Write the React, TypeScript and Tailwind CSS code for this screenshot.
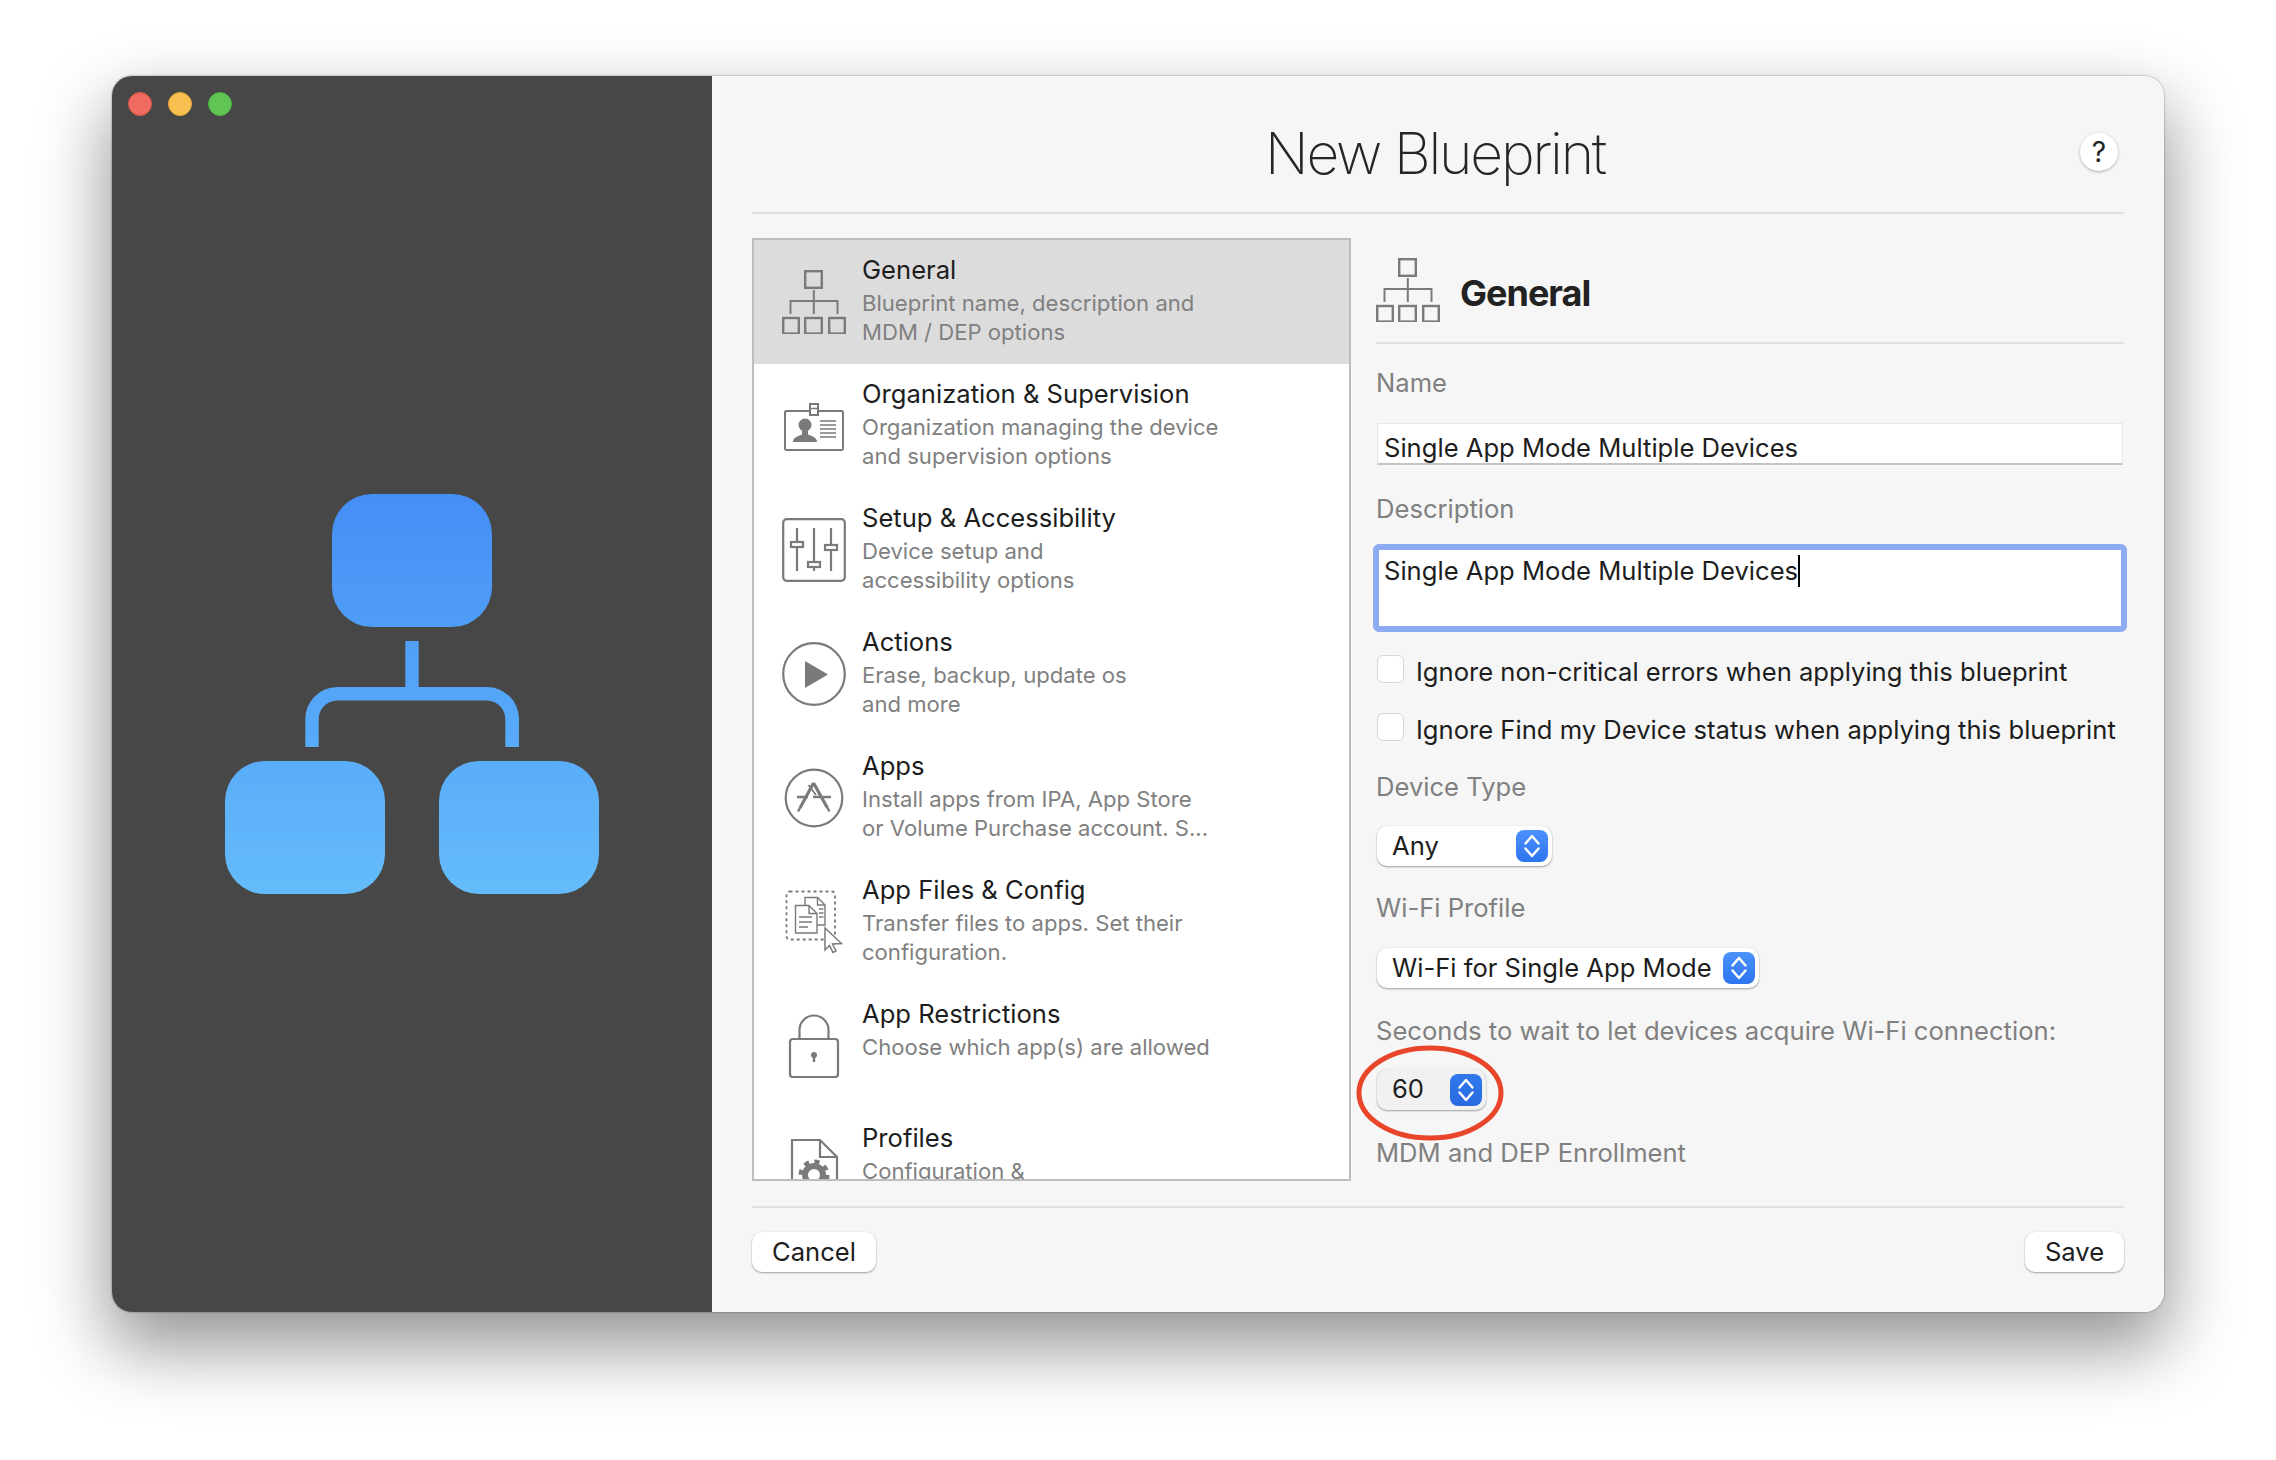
import React from "react";

const G = "#7a7a7a";

function OrgIcon() {
  return (
    <svg width="64" height="64" viewBox="0 0 64 64" fill="none" stroke={G} strokeWidth="2.400" className="shrink-0">
      <rect x="23.200" y="1.200" width="16.600" height="16.600" />
      <path d="M31.800 20V44M8.500 44V31H55.500V44" strokeWidth="2" />
      <rect x="1.200" y="48" width="15.600" height="15.600" />
      <rect x="23.200" y="48" width="16.600" height="15.600" />
      <rect x="47.200" y="48" width="15.600" height="15.600" />
    </svg>
  );
}

function BadgeIcon() {
  return (
    <svg width="64" height="64" viewBox="0 0 64 64" fill="none" stroke={G} strokeWidth="2">
      <path d="M28 17H4.500a1.500 1.500 0 0 0-1.500 1.500V54.500a1.500 1.500 0 0 0 1.500 1.500H59.500a1.500 1.500 0 0 0 1.500-1.500V18.500a1.500 1.500 0 0 0-1.500-1.500H36" />
      <rect x="28" y="10" width="8" height="11" />
      <path d="M28 14.500H36" strokeWidth="1.500" />
      <circle cx="23" cy="31" r="6.500" fill={G} stroke="none" />
      <path d="M11 48c0-5 6-6 9-7.500v-4h6v4c3 1.500 9 2.500 9 7.500z" fill={G} stroke="none" />
      <path d="M38 27H54M38 31H54M38 35H54M38 39H54M38 43H54" strokeWidth="1.600" />
    </svg>
  );
}

function SlidersIcon() {
  return (
    <svg width="64" height="64" viewBox="0 0 64 64" fill="none" stroke={G} strokeWidth="2.200">
      <rect x="1.200" y="1.200" width="61.600" height="61.600" rx="3.500" />
      <path d="M15 10V24M15 29V53M32 10V44M32 49V53M49 10V27M49 32V53" />
      <rect x="9" y="24" width="12" height="5" />
      <rect x="26" y="44" width="12" height="5" />
      <rect x="43" y="27" width="12" height="5" />
    </svg>
  );
}

function PlayIcon() {
  return (
    <svg width="64" height="64" viewBox="0 0 64 64" fill="none" stroke={G} strokeWidth="2.200">
      <circle cx="32" cy="32" r="30.800" />
      <path d="M23 19L46 32.500L23 46z" fill={G} stroke="none" />
    </svg>
  );
}

function AppStoreIcon() {
  return (
    <svg width="64" height="64" viewBox="0 0 64 64" fill="none" stroke={G} strokeWidth="2.200">
      <circle cx="32" cy="32" r="28.300" />
      <path d="M31.500 17L18 42" strokeWidth="3.200" />
      <path d="M31.500 17L45.500 42" strokeWidth="3.200" />
      <path d="M26.500 19L34 29" strokeWidth="1.800" />
      <path d="M15 31H26M31 31H38M41 31H49" strokeWidth="2.400" />
      <path d="M18 42l-2 3.500M45.500 42l2 3.500" strokeWidth="2.400" />
    </svg>
  );
}

function FilesIcon() {
  return (
    <svg width="64" height="64" viewBox="0 0 64 64" fill="none" stroke={G} strokeWidth="1.400" className="overflow-visible">
      <rect x="4.500" y="1.500" width="48.500" height="48" rx="3" strokeDasharray="3 3" strokeWidth="1.800" />
      <path d="M23 15V7.500H35.500L43 15V35H35" />
      <path d="M35.500 7.500V15H43M37 19H41.500M37 23H41.500M37 27H41.500" />
      <path d="M13.500 15.500H27L35 23.500V43H13.500z" fill="#fff" />
      <path d="M27 15.500V23.500H35M17 27H30M17 32H30M17 37H26" />
      <path d="M43 38V60L47.500 55.500L51 62.500L54 61L50.500 54L59.500 53.500z" fill="#fff" strokeWidth="1.500" />
    </svg>
  );
}

function LockIcon() {
  return (
    <svg width="64" height="64" viewBox="0 0 64 64" fill="none" stroke={G} strokeWidth="2.200">
      <path d="M17.500 26V16a14.500 14.500 0 0 1 29 0V26" />
      <rect x="8" y="25" width="48" height="38" rx="3" />
      <circle cx="32" cy="41" r="3" fill={G} stroke="none" />
      <path d="M32 42V48" strokeWidth="2.400" />
    </svg>
  );
}

function ProfileIcon() {
  return (
    <svg width="64" height="64" viewBox="0 0 64 64" fill="none" stroke={G} strokeWidth="2.200">
      <path d="M10 64V2H38L55 19V64" />
      <path d="M38 2V19H55" />
      <circle cx="32" cy="37" r="9" stroke={G} strokeWidth="6" />
      <circle cx="32" cy="37" r="13" stroke={G} strokeWidth="5" strokeDasharray="5 5.200" />
    </svg>
  );
}

function Chevrons() {
  return (
    <svg width="32" height="32" viewBox="0 0 32 32" fill="none" stroke="#fff" strokeWidth="2.400" strokeLinecap="round" strokeLinejoin="round">
      <path d="M9.500 13.500L16 6L22.500 13.500" />
      <path d="M9.500 18.500L16 26L22.500 18.500" />
    </svg>
  );
}

function Select({ children, className, blue }: { children: React.ReactNode; className: string; blue: string }) {
  return (
    <div className={`ml-px rounded-[10px] shadow-[0_1px_2px_rgba(0,0,0,0.35),0_0_1px_rgba(0,0,0,0.15)] flex items-center justify-between pl-[15px] pr-[4px] text-[25.600px] text-[#1d1d1d] ${className}`}>
      <span>{children}</span>
      <span className={`w-[32px] h-[32px] rounded-[8px] ${blue}`}>
        <Chevrons />
      </span>
    </div>
  );
}

function Label({ children, className }: { children: React.ReactNode; className: string }) {
  return <div className={`h-[32px] leading-[32px] text-[25.600px] whitespace-nowrap text-[#808080] ${className}`}>{children}</div>;
}

function Check({ children, className }: { children: React.ReactNode; className: string }) {
  return (
    <div className={`flex items-center h-[28px] ml-px ${className}`}>
      <span className="w-[27px] h-[28px] rounded-[6px] bg-white border border-[#d6d6d6] mr-[12px]" />
      <span className="pt-[6px] text-[25.600px] leading-[32px] text-[#1d1d1d] whitespace-nowrap">{children}</span>
    </div>
  );
}

const rows = [
  { Icon: OrgIcon, title: "General", lines: ["Blueprint name, description and", "MDM / DEP options"], active: true },
  { Icon: BadgeIcon, title: "Organization & Supervision", lines: ["Organization managing the device", "and supervision options"] },
  { Icon: SlidersIcon, title: "Setup & Accessibility", lines: ["Device setup and", "accessibility options"] },
  { Icon: PlayIcon, title: "Actions", lines: ["Erase, backup, update os", "and more"] },
  { Icon: AppStoreIcon, title: "Apps", lines: ["Install apps from IPA, App Store", "or Volume Purchase account. S..."] },
  { Icon: FilesIcon, title: "App Files & Config", lines: ["Transfer files to apps. Set their", "configuration."] },
  { Icon: LockIcon, title: "App Restrictions", lines: ["Choose which app(s) are allowed"] },
  { Icon: ProfileIcon, title: "Profiles", lines: ["Configuration &"] },
];

function Hero() {
  return (
    <svg width="374" height="400" viewBox="225 494 374 400">
      <defs>
        <linearGradient id="hero" gradientUnits="userSpaceOnUse" x1="0" y1="494" x2="0" y2="894">
          <stop offset="0" stopColor="#458ef6" />
          <stop offset="1" stopColor="#64bcfa" />
        </linearGradient>
      </defs>
      <g fill="url(#hero)">
        <rect x="332" y="494" width="160" height="133" rx="40" />
        <rect x="225" y="761" width="160" height="133" rx="40" />
        <rect x="439" y="761" width="160" height="133" rx="40" />
        <path d="M405.300 641H418.700V687H487A32 32 0 0 1 519 719V747H505.300V719A18.500 18.500 0 0 0 487 700.500H337A18.500 18.500 0 0 0 318.700 719V747H305.300V719A32 32 0 0 1 337 687H405.300z" />
      </g>
    </svg>
  );
}

const gradientBlue = "bg-gradient-to-b from-[#4b92fb] to-[#2d74f0]";

export default function App() {
  return (
    <div className="w-[2276px] h-[1460px] bg-white overflow-hidden pt-[76px] pl-[112px] font-[Inter,sans-serif]">
      <div className="w-[2052px] h-[1236px] rounded-[20px] flex overflow-hidden shadow-[0_32px_70px_4px_rgba(0,0,0,0.42),0_0_2px_rgba(0,0,0,0.5)]">
        <div className="relative w-[600px] shrink-0 bg-[#474747] flex items-center justify-center">
          <div className="absolute left-[16px] top-[16px] flex gap-[16px]">
            <span className="w-[24px] h-[24px] rounded-full bg-[#ef6b60] border border-[#dd5249]" />
            <span className="w-[24px] h-[24px] rounded-full bg-[#f6bf4f] border border-[#e0a43a]" />
            <span className="w-[24px] h-[24px] rounded-full bg-[#61c554] border border-[#4eae44]" />
          </div>
          <Hero />
        </div>
        <div className="flex-1 min-w-0 bg-[#f6f6f6] flex flex-col px-[40px]">
          <div className="relative h-[138px] border-b-2 border-[#e0e0e0] flex items-center justify-center">
            <h1 className="text-[57px] font-extralight tracking-[-2.200px] text-[#262626] mt-[19px] ml-[-6px]">New Blueprint</h1>
            <div className="absolute right-[6px] top-[57px] w-[38px] h-[38px] rounded-full bg-white shadow-[0_1px_3px_rgba(0,0,0,0.3)] flex items-center justify-center text-[28px] text-[#262626]">?</div>
          </div>
          <div className="flex gap-[25px] h-[943px] mt-[24px]">
            <div className="w-[599px] shrink-0 border-2 border-[#bdbdbd] bg-white overflow-hidden">
              {rows.map((r) => (
                <div key={r.title} className={`h-[124px] flex ${r.active ? "bg-[#dcdcdc]" : ""}`}>
                  <div className="w-[108px] shrink-0 pl-[28px] flex items-center">
                    <r.Icon />
                  </div>
                  <div className="pt-[14px] whitespace-nowrap">
                    <div className="text-[25.600px] leading-[32px] text-[#1d1d1d]">{r.title}</div>
                    <div className="mt-[3px]">
                      {r.lines.map((l) => (
                        <div key={l} className="text-[22.100px] leading-[28.500px] text-[#808080]">{l}</div>
                      ))}
                    </div>
                  </div>
                </div>
              ))}
            </div>
            <div className="flex-1 min-w-0">
              <div className="h-[106px] border-b-2 border-[#e0e0e0] flex items-center">
                <OrgIcon />
                <span className="ml-[20px] mt-[6px] text-[36px] font-bold tracking-[-1px] text-[#222]">General</span>
              </div>
              <Label className="mt-[23px]">Name</Label>
              <div className="mt-[24px] mx-px h-[42px] bg-white border border-[#e6e6e6] border-b-2 border-b-[#c4c4c4] pl-[6px] pt-[8px] text-[25.600px] leading-[32px] text-[#1d1d1d]">Single App Mode Multiple Devices</div>
              <Label className="mt-[28px]">Description</Label>
              <div className="mt-[19px] mx-[-3px] h-[88px] rounded-[6px] border-[6px] border-[#8cabf1] bg-white pl-[5px] pt-[5px] text-[25.600px] leading-[32px] text-[#1d1d1d]">
                <span className="inline-block border-r-2 border-black">Single App Mode Multiple Devices</span>
              </div>
              <Check className="mt-[23px]">Ignore non-critical errors when applying this blueprint</Check>
              <Check className="mt-[30px]">Ignore Find my Device status when applying this blueprint</Check>
              <Label className="mt-[30px]">Device Type</Label>
              <Select className="w-[175px] h-[40px] mt-[23px] bg-white" blue={gradientBlue}>Any</Select>
              <Label className="mt-[26px]">Wi-Fi Profile</Label>
              <Select className="w-[382px] h-[40px] mt-[24px] bg-white" blue={gradientBlue}>Wi-Fi for Single App Mode</Select>
              <Label className="mt-[27px]">Seconds to wait to let devices acquire Wi-Fi connection:</Label>
              <div className="relative w-[110px] mt-[22px]">
                <Select className="w-[109px] h-[41px] bg-[#f1f1f1]" blue="bg-gradient-to-b from-[#3178ec] to-[#2a6ae0]">60</Select>
                <svg className="absolute left-[-20px] top-[-25px]" width="150" height="98" viewBox="0 0 150 98" fill="none">
                  <ellipse cx="74" cy="49" rx="71" ry="45" stroke="#e8452a" strokeWidth="5" />
                </svg>
              </div>
              <Label className="mt-[27px]">MDM and DEP Enrollment</Label>
            </div>
          </div>
          <div className="mt-[25px] border-t-2 border-[#e0e0e0] pt-[24px] flex justify-between">
            <div className="w-[124px] h-[40px] rounded-[10px] bg-white shadow-[0_1px_2px_rgba(0,0,0,0.35),0_0_1px_rgba(0,0,0,0.15)] flex items-center justify-center text-[25.600px] text-[#1d1d1d]">Cancel</div>
            <div className="w-[99px] h-[40px] rounded-[10px] bg-white shadow-[0_1px_2px_rgba(0,0,0,0.35),0_0_1px_rgba(0,0,0,0.15)] flex items-center justify-center text-[25.600px] text-[#1d1d1d]">Save</div>
          </div>
        </div>
      </div>
    </div>
  );
}
